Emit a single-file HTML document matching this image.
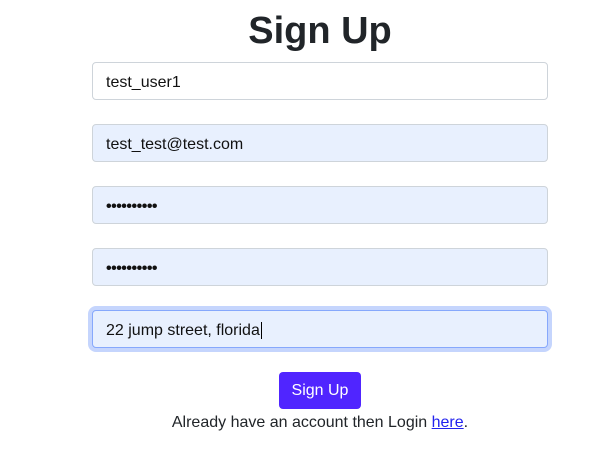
<!DOCTYPE html>
<html><head><style>
body{margin:0;width:616px;height:470px;background:#fff;font-family:"Liberation Sans","DejaVu Sans",sans-serif;color:#212529;position:relative;overflow:hidden}
h1{position:absolute;top:6px;left:0;width:640px;text-align:center;margin:0;font-size:38px;font-weight:bold;line-height:50px}
.in{position:absolute;left:92px;width:441px;height:36px;border:1px solid #ced4da;border-radius:4px;background:#e8f0fe;font-size:16px;line-height:39px;padding-left:13px;box-sizing:content-box;color:#111}
.btn{position:absolute;left:279px;top:372px;width:82px;height:37px;background:#5025ff;border-radius:4px;color:#fff;font-size:16px;line-height:38px;text-align:center}
.t{position:absolute;top:413px;left:0;width:640px;text-align:center;font-size:16px;line-height:20px}
.d{font-size:16px;letter-spacing:-0.5px;font-weight:bold}
a{color:#2222ee}
</style></head><body>
<h1>Sign Up</h1>
<div class="in" style="top:62px;background:#fff">test_user1</div>
<div class="in" style="top:124px">test_test@test.com</div>
<div class="in d" style="top:186px">••••••••••</div>
<div class="in d" style="top:248px">••••••••••</div>
<div class="in" style="top:310px;border-color:#86a8fc;box-shadow:0 0 0 4px #c5d5fd">22 jump street, florida<span style="border-left:1px solid #000;margin-left:1px"></span></div>
<div class="btn">Sign Up</div>
<div class="t">Already have an account then Login <a href="#">here</a>.</div>
</body></html>
